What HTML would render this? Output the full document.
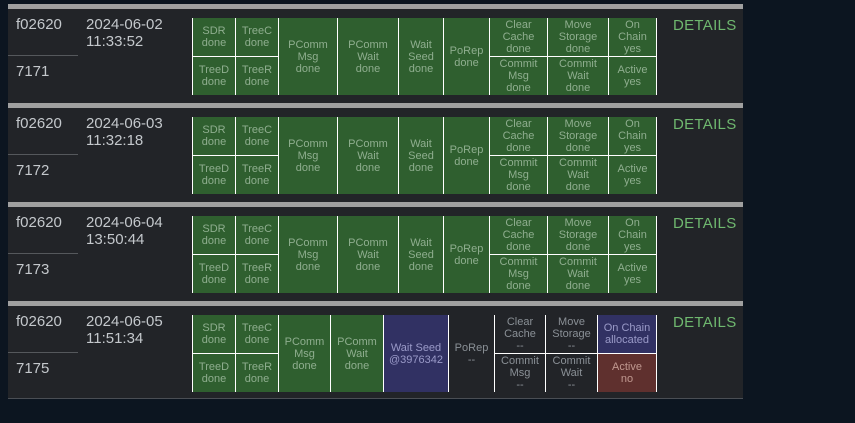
<!DOCTYPE html>
<html><head><meta charset="utf-8"><style>
*{margin:0;padding:0;box-sizing:border-box}
body{width:855px;height:423px;background:#0c1520;font-family:"Liberation Sans",sans-serif;position:relative;overflow:hidden}
.bar{position:absolute;left:8px;width:735px;height:5px;background:#a0a0a0}
.row{position:absolute;left:8px;width:735px;height:94px;background:#222428}
.name{position:absolute;left:8px;top:7px;font-size:15px;color:#c4c8cc}
.num{position:absolute;left:8px;top:54px;font-size:15px;color:#c4c8cc}
.div{position:absolute;left:0;top:46px;width:70px;height:1px;background:#55585c}
.date{position:absolute;left:78px;top:7px;font-size:15px;line-height:17px;color:#c4c8cc}
.det{position:absolute;left:665px;top:8px;font-size:15px;color:#6fb86f;letter-spacing:.3px}
.tb{position:absolute;left:184px;top:9px;width:465px;height:77px}
.c{position:absolute;display:flex;align-items:center;justify-content:center;text-align:center;font-size:11px;line-height:12px;color:#8fae8f;border-left:1px solid #fff}
.g{background:#2f5f2f}
.b{background:#313163;color:#9a9ac8}
.r{background:#5f302e;color:#c09890}
.k{color:#8a9096}
.t{top:0;height:38px}
.d{top:38px;height:39px;border-top:1px solid #fff}
.f{top:0;height:77px}
.e{border-right:1px solid #fff}
.n{border-left:none}
</style></head><body>
<div class="bar" style="top:4px"></div>
<div class="bar" style="top:103px"></div>
<div class="bar" style="top:202px"></div>
<div class="bar" style="top:301px"></div>

<div class="row" style="top:9px">
<div class="name">f02620</div><div class="div"></div><div class="num">7171</div>
<div class="date">2024-06-02<br>11:33:52</div>
<div class="tb">
<div class="c g t" style="left:0;width:43px">SDR<br>done</div>
<div class="c g d" style="left:0;width:43px">TreeD<br>done</div>
<div class="c g t" style="left:43px;width:43px">TreeC<br>done</div>
<div class="c g d" style="left:43px;width:43px">TreeR<br>done</div>
<div class="c g f" style="left:86px;width:59px">PComm<br>Msg<br>done</div>
<div class="c g f" style="left:145px;width:61px">PComm<br>Wait<br>done</div>
<div class="c g f" style="left:206px;width:45px">Wait<br>Seed<br>done</div>
<div class="c g f" style="left:251px;width:46px">PoRep<br>done</div>
<div class="c g t" style="left:297px;width:58px">Clear<br>Cache<br>done</div>
<div class="c g d" style="left:297px;width:58px">Commit<br>Msg<br>done</div>
<div class="c g t" style="left:355px;width:61px">Move<br>Storage<br>done</div>
<div class="c g d" style="left:355px;width:61px">Commit<br>Wait<br>done</div>
<div class="c g t e" style="left:416px;width:49px">On<br>Chain<br>yes</div>
<div class="c g d e" style="left:416px;width:49px">Active<br>yes</div>
</div>
<div class="det">DETAILS</div>
</div>

<div class="row" style="top:108px">
<div class="name">f02620</div><div class="div"></div><div class="num">7172</div>
<div class="date">2024-06-03<br>11:32:18</div>
<div class="tb">
<div class="c g t" style="left:0;width:43px">SDR<br>done</div>
<div class="c g d" style="left:0;width:43px">TreeD<br>done</div>
<div class="c g t" style="left:43px;width:43px">TreeC<br>done</div>
<div class="c g d" style="left:43px;width:43px">TreeR<br>done</div>
<div class="c g f" style="left:86px;width:59px">PComm<br>Msg<br>done</div>
<div class="c g f" style="left:145px;width:61px">PComm<br>Wait<br>done</div>
<div class="c g f" style="left:206px;width:45px">Wait<br>Seed<br>done</div>
<div class="c g f" style="left:251px;width:46px">PoRep<br>done</div>
<div class="c g t" style="left:297px;width:58px">Clear<br>Cache<br>done</div>
<div class="c g d" style="left:297px;width:58px">Commit<br>Msg<br>done</div>
<div class="c g t" style="left:355px;width:61px">Move<br>Storage<br>done</div>
<div class="c g d" style="left:355px;width:61px">Commit<br>Wait<br>done</div>
<div class="c g t e" style="left:416px;width:49px">On<br>Chain<br>yes</div>
<div class="c g d e" style="left:416px;width:49px">Active<br>yes</div>
</div>
<div class="det">DETAILS</div>
</div>

<div class="row" style="top:207px">
<div class="name">f02620</div><div class="div"></div><div class="num">7173</div>
<div class="date">2024-06-04<br>13:50:44</div>
<div class="tb">
<div class="c g t" style="left:0;width:43px">SDR<br>done</div>
<div class="c g d" style="left:0;width:43px">TreeD<br>done</div>
<div class="c g t" style="left:43px;width:43px">TreeC<br>done</div>
<div class="c g d" style="left:43px;width:43px">TreeR<br>done</div>
<div class="c g f" style="left:86px;width:59px">PComm<br>Msg<br>done</div>
<div class="c g f" style="left:145px;width:61px">PComm<br>Wait<br>done</div>
<div class="c g f" style="left:206px;width:45px">Wait<br>Seed<br>done</div>
<div class="c g f" style="left:251px;width:46px">PoRep<br>done</div>
<div class="c g t" style="left:297px;width:58px">Clear<br>Cache<br>done</div>
<div class="c g d" style="left:297px;width:58px">Commit<br>Msg<br>done</div>
<div class="c g t" style="left:355px;width:61px">Move<br>Storage<br>done</div>
<div class="c g d" style="left:355px;width:61px">Commit<br>Wait<br>done</div>
<div class="c g t e" style="left:416px;width:49px">On<br>Chain<br>yes</div>
<div class="c g d e" style="left:416px;width:49px">Active<br>yes</div>
</div>
<div class="det">DETAILS</div>
</div>

<div class="row" style="top:306px;height:93px;border-bottom:1px solid #4a4e54">
<div class="name">f02620</div><div class="div"></div><div class="num">7175</div>
<div class="date">2024-06-05<br>11:51:34</div>
<div class="tb">
<div class="c g t" style="left:0;width:43px">SDR<br>done</div>
<div class="c g d" style="left:0;width:43px">TreeD<br>done</div>
<div class="c g t" style="left:43px;width:43px">TreeC<br>done</div>
<div class="c g d" style="left:43px;width:43px">TreeR<br>done</div>
<div class="c g f" style="left:86px;width:52px">PComm<br>Msg<br>done</div>
<div class="c g f" style="left:138px;width:53px">PComm<br>Wait<br>done</div>
<div class="c b f e" style="left:191px;width:66px">Wait Seed<br>@3976342</div>
<div class="c k f n" style="left:257px;width:45px">PoRep<br>--</div>
<div class="c k t" style="left:302px;width:51px">Clear<br>Cache<br>--</div>
<div class="c k d" style="left:302px;width:51px">Commit<br>Msg<br>--</div>
<div class="c k t" style="left:353px;width:52px">Move<br>Storage<br>--</div>
<div class="c k d" style="left:353px;width:52px">Commit<br>Wait<br>--</div>
<div class="c b t e" style="left:405px;width:60px">On Chain<br>allocated</div>
<div class="c r d e" style="left:405px;width:60px">Active<br>no</div>
</div>
<div class="det">DETAILS</div>
</div>
</body></html>
